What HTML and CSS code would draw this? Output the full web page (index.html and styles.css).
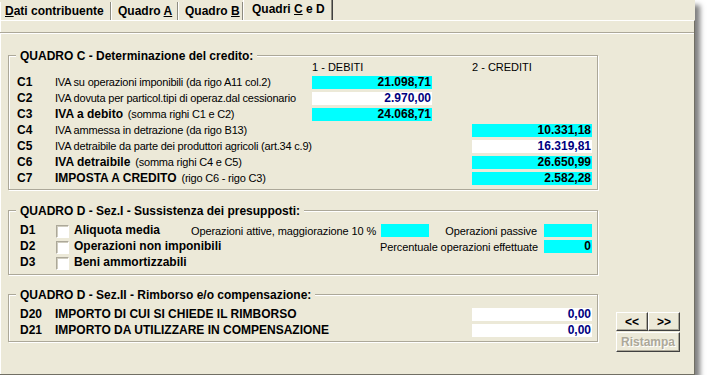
FILE: index.html
```html
<!DOCTYPE html>
<html lang="it">
<head>
    <meta charset="UTF-8">
    <title>Quadri C e D</title>
    <link rel="stylesheet" href="styles.css">
</head>
<body>
    <div class="window">
        <div class="tabs">
            <div class="tab tab-1"><u>D</u>ati contribuente</div>
            <div class="tab tab-2">Quadro <u>A</u></div>
            <div class="tab tab-3">Quadro <u>B</u></div>
            <div class="tab tab-4 active">Quadri <u>C</u> e D</div>
        </div>

        <div class="panel">
            <div class="strip"></div>
            <div class="content">
                <div class="groups">

                    <div class="group group-c">
                        <div class="legend">QUADRO C - Determinazione del credito:</div>
                        <div class="grid-c">
                            <div class="head debit">1 - DEBITI</div>
                            <div class="head credit">2 - CREDITI</div>

                            <div class="code">C1</div>
                            <div class="desc">IVA su operazioni imponibili (da rigo A11 col.2)</div>
                            <div class="field cyan debit">21.098,71</div>

                            <div class="code">C2</div>
                            <div class="desc">IVA dovuta per particol.tipi di operaz.dal cessionario</div>
                            <div class="field white debit">2.970,00</div>

                            <div class="code">C3</div>
                            <div class="desc"><b>IVA a debito</b> (somma righi C1 e C2)</div>
                            <div class="field cyan debit">24.068,71</div>

                            <div class="code">C4</div>
                            <div class="desc">IVA ammessa in detrazione (da rigo B13)</div>
                            <div class="field cyan credit">10.331,18</div>

                            <div class="code">C5</div>
                            <div class="desc">IVA detraibile da parte dei produttori agricoli (art.34 c.9)</div>
                            <div class="field white credit">16.319,81</div>

                            <div class="code">C6</div>
                            <div class="desc"><b>IVA detraibile</b> (somma righi C4 e C5)</div>
                            <div class="field cyan credit">26.650,99</div>

                            <div class="code">C7</div>
                            <div class="desc"><b>IMPOSTA A CREDITO</b> (rigo C6 - rigo C3)</div>
                            <div class="field cyan credit">2.582,28</div>
                        </div>
                    </div>

                    <div class="group group-d1">
                        <div class="legend">QUADRO D - Sez.I - Sussistenza dei presupposti:</div>
                        <div class="checks">
                            <div class="code">D1</div>
                            <div class="check"><span class="box"></span>Aliquota media</div>
                            <div class="code">D2</div>
                            <div class="check"><span class="box"></span>Operazioni non imponibili</div>
                            <div class="code">D3</div>
                            <div class="check"><span class="box"></span>Beni ammortizzabili</div>
                        </div>
                        <div class="extras">
                            <div class="extra-row">
                                <span class="extra-label gap-5">Operazioni attive, maggiorazione 10 %</span>
                                <div class="field cyan small gap-16"></div>
                                <span class="extra-label gap-7">Operazioni passive</span>
                                <div class="field cyan small"></div>
                            </div>
                            <div class="extra-row">
                                <span class="extra-label gap-6">Percentuale operazioni effettuate</span>
                                <div class="field cyan small">0</div>
                            </div>
                        </div>
                    </div>

                    <div class="group group-d2">
                        <div class="legend">QUADRO D - Sez.II - Rimborso e/o compensazione:</div>
                        <div class="grid-d2">
                            <div class="code">D20</div>
                            <div class="label">IMPORTO DI CUI SI CHIEDE IL RIMBORSO</div>
                            <div class="field white">0,00</div>

                            <div class="code">D21</div>
                            <div class="label">IMPORTO DA UTILIZZARE IN COMPENSAZIONE</div>
                            <div class="field white">0,00</div>
                        </div>
                    </div>

                </div>

                <div class="buttons">
                    <div class="nav">
                        <button class="btn">&lt;&lt;</button>
                        <button class="btn">&gt;&gt;</button>
                    </div>
                    <button class="btn wide" disabled>Ristampa</button>
                </div>
            </div>
        </div>
    </div>
</body>
</html>
```

FILE: styles.css
```css
body {
    margin: 0;
    background-color: #fff;
    font-family: "Liberation Sans", Arial, sans-serif;
    font-size: 11px;
    color: #000;
}
.window {
    width: 695px;
    height: 375px;
    background-color: #ece9d8;
    box-shadow: 5px 5px 5px rgba(0, 0, 0, 0.5);
}

/* tab strip */
.tabs {
    display: flex;
    align-items: flex-end;
    height: 20px;
}
.tab {
    box-sizing: border-box;
    height: 18px;
    padding-top: 1px;
    line-height: 17px;
    font-size: 12px;
    font-weight: bold;
    white-space: nowrap;
    border-left: 1px solid #fff;
    border-right: 1px solid #8d8b80;
}
.tab u {
    text-underline-offset: 1px;
}
.tab-1 { width: 111px; padding-left: 4px; }
.tab-2 { width: 67px; padding-left: 6px; }
.tab-3 { width: 65px; padding-left: 6px; }
.tab-4 { width: 90px; padding-left: 8px; }
.tab.active {
    height: 20px;
    border-right-color: #404040;
    box-shadow: inset -1px 0 0 #8d8b80;
}

.panel {
    box-sizing: border-box;
    height: 355px;
    border-top: 1px solid #fff;
    border-right: 1px solid #716f64;
    border-bottom: 1px solid #716f64;
    box-shadow: inset 1px 0 0 #fff;
}
.strip {
    height: 11px;
    border-bottom: 1px solid #aca899;
}
.content {
    display: flex;
    padding-left: 8px;
    border-top: 1px solid #fff;
}
.groups {
    width: 590px;
    margin-top: 21px;
}

/* etched group boxes */
.group {
    position: relative;
    box-sizing: border-box;
    border: 1px solid #aca899;
    box-shadow: 1px 1px 0 #fff, inset 1px 1px 0 #fff;
    padding-right: 5px;
}
.legend {
    position: absolute;
    top: -7px;
    left: 7px;
    padding: 0 4px;
    line-height: 14px;
    font-size: 12px;
    font-weight: bold;
    background-color: #ece9d8;
    white-space: nowrap;
}
.group-c {
    height: 135px;
    padding-top: 4px;
    padding-left: 8px;
}
.group-d1 {
    display: grid;
    grid-template-columns: 1fr;
    height: 65px;
    margin-top: 20px;
    padding-top: 13px;
    padding-left: 11px;
}
.group-d2 {
    height: 48px;
    margin-top: 19px;
    padding-top: 13px;
    padding-left: 11px;
}

.code {
    font-size: 12px;
    font-weight: bold;
}
.desc {
    letter-spacing: -0.2px;
    white-space: nowrap;
}
.desc b {
    font-size: 12px;
    letter-spacing: 0;
    margin-right: 2px;
}

/* quadro C grid */
.grid-c {
    display: grid;
    grid-template-columns: 38px 1fr 120px 40px 120px;
    grid-auto-rows: 13px;
    row-gap: 3px;
    line-height: 13px;
}
.grid-c .code { grid-column: 1; }
.grid-c .desc { grid-column: 2; }
.debit { grid-column: 3; }
.credit { grid-column: 5; }
.head {
    line-height: 14px;
}

.field {
    box-sizing: border-box;
    height: 13px;
    padding-right: 1px;
    text-align: right;
    font-size: 12px;
    font-weight: bold;
    line-height: 13px;
}
.field.cyan {
    background-color: #00ffff;
    color: #000;
}
.field.white {
    background-color: #fff;
    color: #000080;
}
.field.small {
    width: 48px;
    flex-shrink: 0;
}

/* quadro D sez. I: checks and extra fields share one cell */
.checks {
    grid-area: 1 / 1;
    align-self: start;
    justify-self: start;
    display: grid;
    grid-template-columns: 36px auto;
    grid-auto-rows: 13px;
    row-gap: 3px;
    line-height: 13px;
}
.check {
    display: flex;
    align-items: center;
    font-size: 12px;
    font-weight: bold;
    white-space: nowrap;
}
.box {
    box-sizing: border-box;
    flex-shrink: 0;
    width: 13px;
    height: 13px;
    margin-top: 2px;
    margin-right: 5px;
    background-color: #fff;
    border: 1px solid;
    border-color: #aca899 #fff #fff #aca899;
    box-shadow: inset 1px 1px 0 #d0cdbf;
}
.extras {
    grid-area: 1 / 1;
    align-self: start;
    justify-self: end;
    display: flex;
    flex-direction: column;
    align-items: flex-end;
    gap: 3px;
}
.extra-row {
    display: flex;
    align-items: center;
    height: 13px;
}
.extra-label {
    letter-spacing: -0.1px;
    white-space: nowrap;
}
.gap-5 { margin-right: 5px; }
.gap-6 { margin-right: 6px; }
.gap-7 { margin-right: 7px; }
.gap-16 { margin-right: 16px; }

/* quadro D sez. II */
.grid-d2 {
    display: grid;
    grid-template-columns: 35px 1fr 120px;
    grid-auto-rows: 13px;
    row-gap: 3px;
    line-height: 13px;
}
.label {
    font-size: 12px;
    font-weight: bold;
    white-space: nowrap;
}

/* buttons */
.buttons {
    display: flex;
    flex-direction: column;
    gap: 1px;
    margin-top: 278px;
    margin-left: 18px;
}
.nav {
    display: flex;
}
.btn {
    box-sizing: border-box;
    width: 32px;
    height: 19px;
    padding: 0;
    font-family: "Liberation Sans", Arial, sans-serif;
    font-size: 12px;
    font-weight: bold;
    color: #000;
    background-color: #ece9d8;
    border: 1px solid;
    border-color: #fff #404040 #404040 #fff;
    box-shadow: inset -1px -1px 0 #aca899;
}
.btn.wide {
    width: 64px;
    height: 20px;
}
.btn:disabled {
    color: #aca899;
    text-shadow: 1px 1px 0 #fff;
}
```
